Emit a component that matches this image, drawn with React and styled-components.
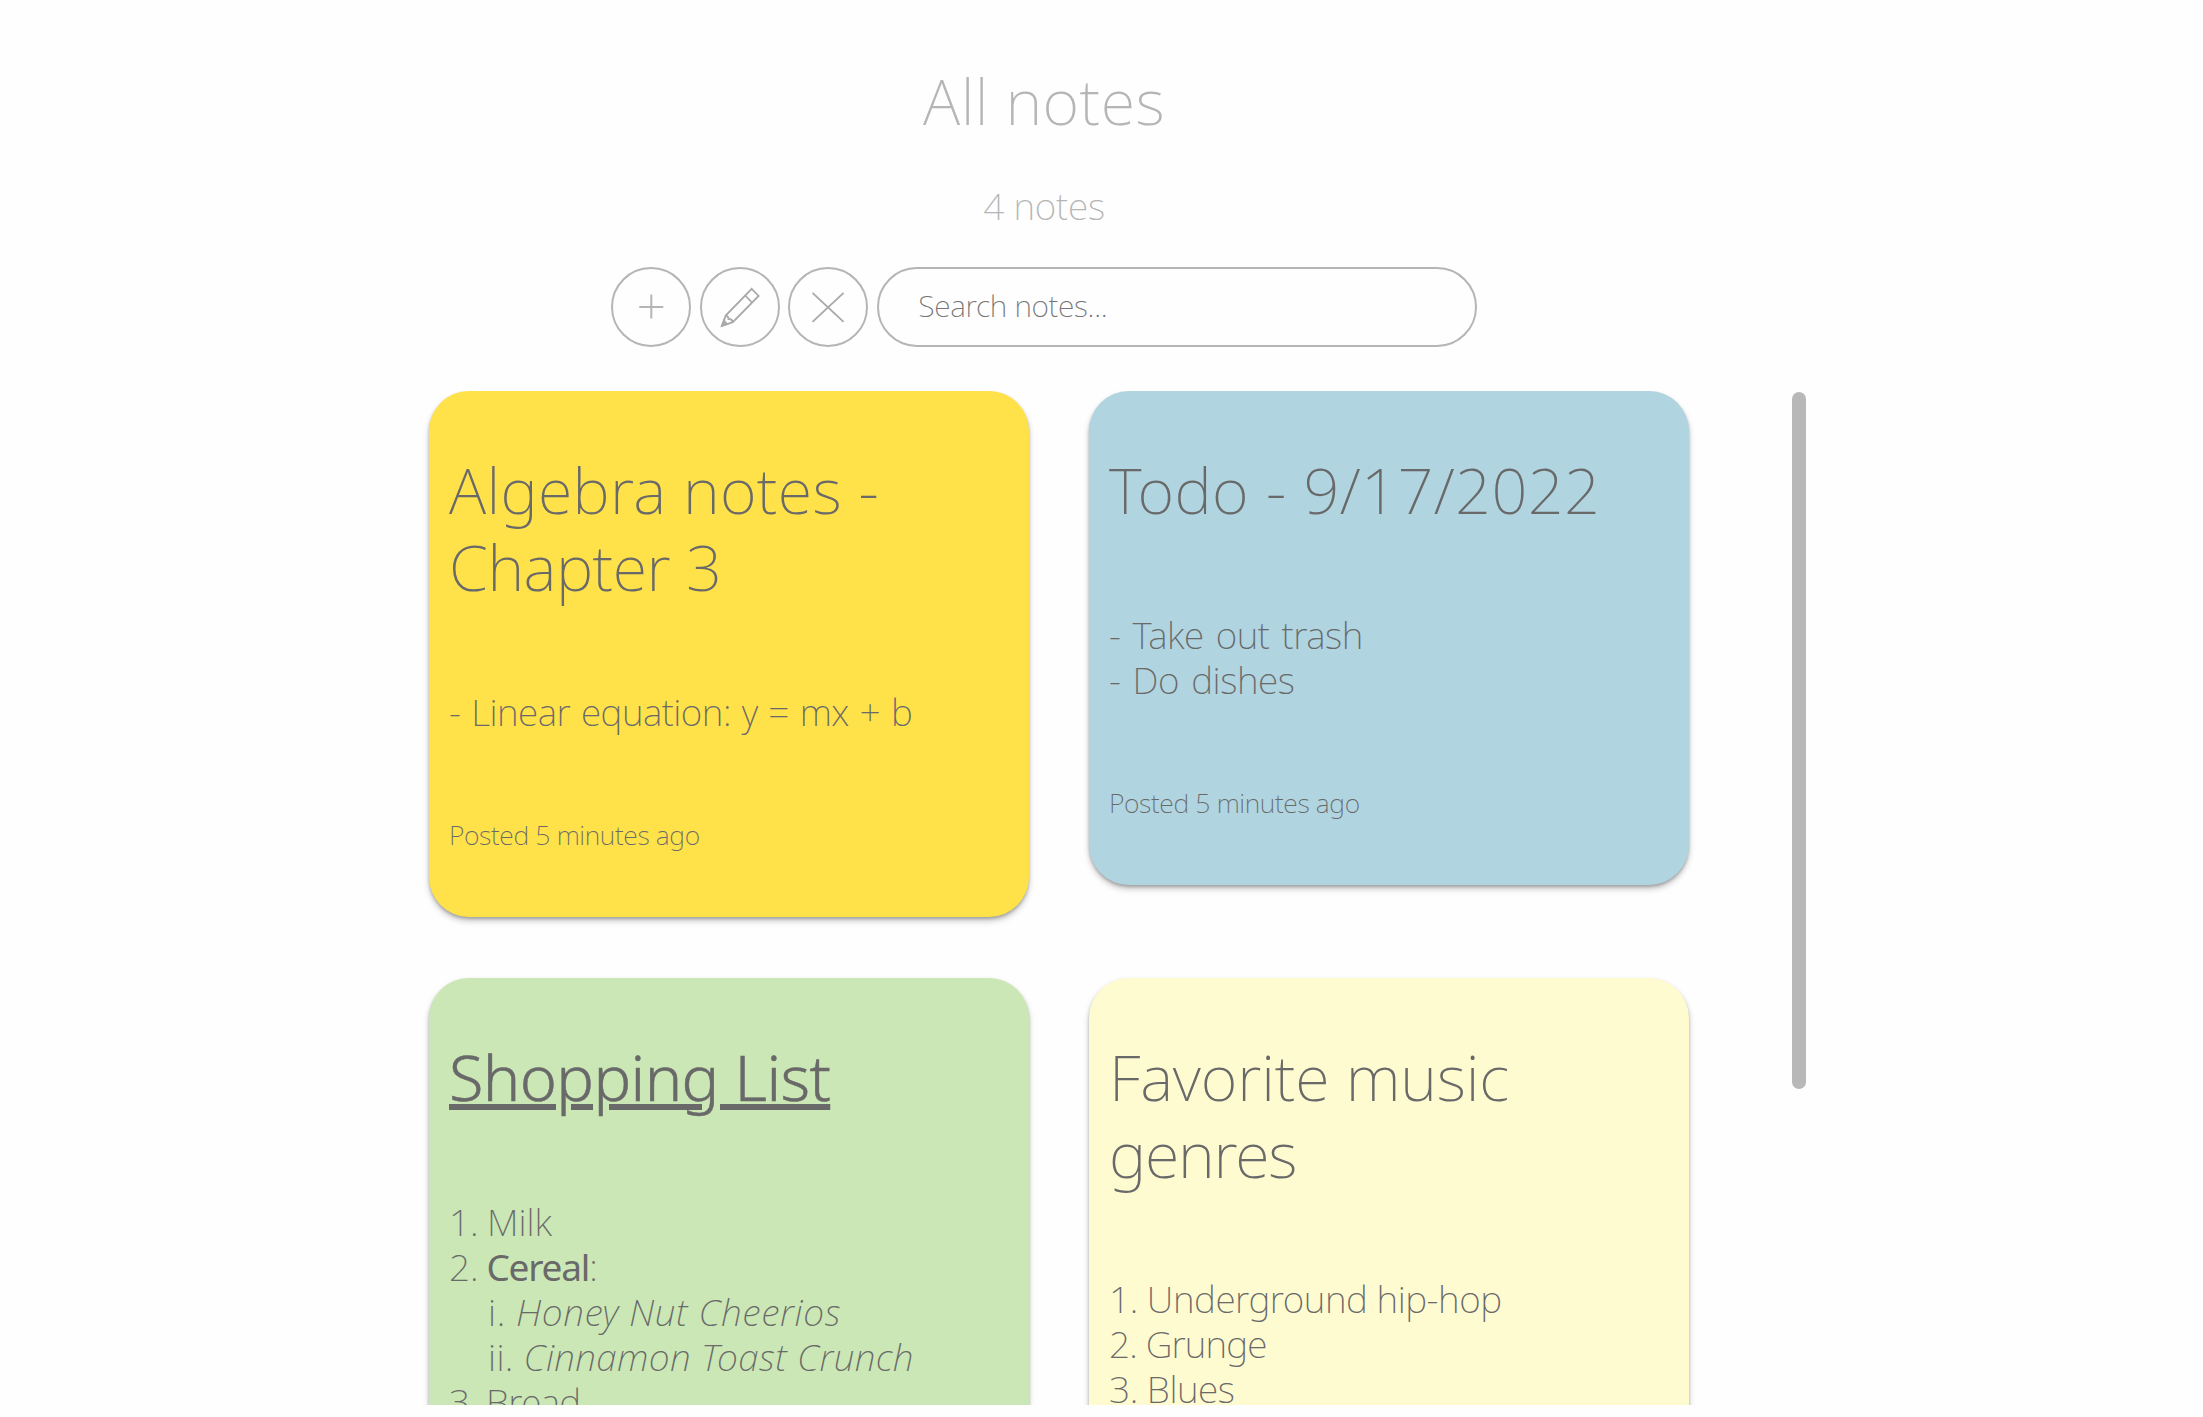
import React from "react";
import styled, { createGlobalStyle } from "styled-components";

const GlobalStyle = createGlobalStyle`
  * { box-sizing: border-box; }
  body {
    margin: 0;
    background: #fefefe;
    font-family: "Noto Sans", "Open Sans", sans-serif;
    font-weight: 200;
    color: #696969;
  }
`;

const Page = styled.main`
  width: 2088px;
  height: 1417px;
  padding-top: 62px;
  overflow: hidden;
  display: flex;
  flex-direction: column;
  align-items: center;
`;

const Heading = styled.h1`
  margin: 0;
  font-size: 63px;
  line-height: 77px;
  font-weight: 200;
  letter-spacing: 0.4px;
  color: #b5b5b5;
`;

const Count = styled.h3`
  margin: 44px 0 39px;
  font-size: 37px;
  line-height: 45px;
  font-weight: 200;
  letter-spacing: -0.2px;
  color: #b5b5b5;
`;

const Toolbar = styled.div`
  display: flex;
  gap: 8.8px;
  margin-bottom: 44px;
`;

const RoundButton = styled.button`
  width: 80px;
  height: 80px;
  padding: 0;
  border: 2px solid #b5b5b5;
  border-radius: 50%;
  background: transparent;
  display: grid;
  place-items: center;

  svg {
    fill: none;
    stroke: #a9a9a9;
    stroke-width: 1.8;
  }
`;

const SearchInput = styled.input`
  width: 600px;
  height: 80px;
  padding: 0 38px 3px 39px;
  border: 2px solid #b5b5b5;
  border-radius: 40px;
  background: transparent;
  font: 200 30px "Noto Sans", sans-serif;
  letter-spacing: -0.35px;
  outline: none;

  &::placeholder {
    color: #757575;
    opacity: 1;
  }
`;

const Board = styled.section`
  width: 1524px;
  height: 1014px;
  padding-left: 147px;
  display: flex;
  overflow: hidden;
`;

const Notes = styled.div`
  display: grid;
  grid-template-columns: 600px 600px;
  column-gap: 60px;
  row-gap: 61px;
  align-items: start;
  align-content: start;
`;

const ScrollThumb = styled.div`
  width: 14px;
  height: 697px;
  margin: 1px 0 0 103px;
  border-radius: 7px;
  background: #b8b8b8;
`;

const Card = styled.article`
  width: 600px;
  padding: 60px 20px 66px;
  border-radius: 40px;
  background: ${(p) => p.$color};
  box-shadow: 0 4px 6px rgba(0, 0, 0, 0.22), 0 2px 3px rgba(0, 0, 0, 0.2);
`;

const Title = styled.h2`
  margin: 0 0 84px;
  font-size: 63px;
  line-height: 77px;
  font-weight: ${(p) => (p.$strong ? 300 : 200)};
  text-decoration: ${(p) => (p.$strong ? "underline" : "none")};
  text-decoration-thickness: 6px;
  text-underline-offset: 3px;
  -webkit-text-stroke: ${(p) => (p.$strong ? "0.5px #696969" : "0")};
`;

const TitleLine = styled.span`
  display: block;
  letter-spacing: ${(p) => p.$spacing}px;
`;

const Body = styled.div`
  font-size: 37px;
  line-height: 45px;
`;

const Line = styled.div`
  padding-left: ${(p) => (p.$nested ? "39px" : "0")};
  letter-spacing: ${(p) => p.$spacing || 0}px;
  word-spacing: ${(p) => p.$gap || 0}px;
  white-space: pre;
`;

const Strong = styled.b`
  font-weight: 400;
  letter-spacing: -1.2px;
`;

const Posted = styled.p`
  margin: 85px 0 0;
  font-size: 26.6px;
  line-height: 32px;
  letter-spacing: -0.38px;
`;

function PlusIcon() {
  return (
    <svg width="76" height="76" viewBox="2 2 76 76">
      <path d="M28.3 40H52.3M40.3 27.5V51.5" stroke="#b5b5b5" strokeWidth="2" />
    </svg>
  );
}

function PencilIcon() {
  return (
    <svg width="76" height="76" viewBox="2 2 76 76">
      <path d="M51.7 21.9L58.6 28.9L32.8 55.2L22 58.9L25.7 48.6Z" />
      <path d="M45.3 28.5L51.9 35.5M25.7 48.6C27.4 48.8 28.4 50 28.5 52C30.6 51.8 32.3 53 32.8 55.2" />
      <path d="M23.9 53.6L27.2 57.2L22 58.9Z" fill="#a9a9a9" />
    </svg>
  );
}

function CloseIcon() {
  return (
    <svg width="76" height="76" viewBox="2 2 76 76">
      <path d="M24.5 25.9L55.6 54.9M55.6 25.9L24.5 54.9" />
    </svg>
  );
}

export default function App() {
  return (
    <>
      <GlobalStyle />
      <Page>
        <Heading>All notes</Heading>
        <Count>4 notes</Count>
        <Toolbar>
          <RoundButton aria-label="Add"><PlusIcon /></RoundButton>
          <RoundButton aria-label="Edit"><PencilIcon /></RoundButton>
          <RoundButton aria-label="Delete"><CloseIcon /></RoundButton>
          <SearchInput placeholder="Search notes..." />
        </Toolbar>
        <Board>
          <Notes>
            <Card $color="#ffe149">
              <Title>
                <TitleLine $spacing={0.3}>Algebra notes -</TitleLine>
                <TitleLine $spacing={-0.5}>Chapter 3</TitleLine>
              </Title>
              <Body>
                <Line $gap={1.6} $spacing={-0.5}>- Linear equation: y = mx + b</Line>
              </Body>
              <Posted>Posted 5 minutes ago</Posted>
            </Card>
            <Card $color="#b0d4e0">
              <Title>
                <TitleLine $spacing={0.42}>Todo - 9/17/2022</TitleLine>
              </Title>
              <Body>
                <Line $gap={2.8} $spacing={-0.43}>- Take out trash</Line>
                <Line $gap={2.8} $spacing={-0.4}>- Do dishes</Line>
              </Body>
              <Posted>Posted 5 minutes ago</Posted>
            </Card>
            <Card $color="#cae7b5">
              <Title $strong>
                <TitleLine $spacing={-0.6}>Shopping List</TitleLine>
              </Title>
              <Body>
                <Line $gap={-1.3}>1. Milk</Line>
                <Line $gap={-1.8}>2. <Strong>Cereal</Strong>:</Line>
                <Line $nested $spacing={0.6}>i. <i>Honey Nut Cheerios</i></Line>
                <Line $nested $spacing={0.35}>ii. <i>Cinnamon Toast Crunch</i></Line>
                <Line $gap={-0.5} $spacing={-0.6}>3. Bread</Line>
              </Body>
              <Posted>Posted 5 minutes ago</Posted>
            </Card>
            <Card $color="#fffbd0">
              <Title>
                <TitleLine $spacing={-0.15}>Favorite music</TitleLine>
                <TitleLine $spacing={-1.2}>genres</TitleLine>
              </Title>
              <Body>
                <Line $spacing={-0.45}>1. Underground hip-hop</Line>
                <Line $spacing={-0.85}>2. Grunge</Line>
                <Line $spacing={-0.45}>3. Blues</Line>
              </Body>
              <Posted>Posted 5 minutes ago</Posted>
            </Card>
          </Notes>
          <ScrollThumb />
        </Board>
      </Page>
    </>
  );
}
